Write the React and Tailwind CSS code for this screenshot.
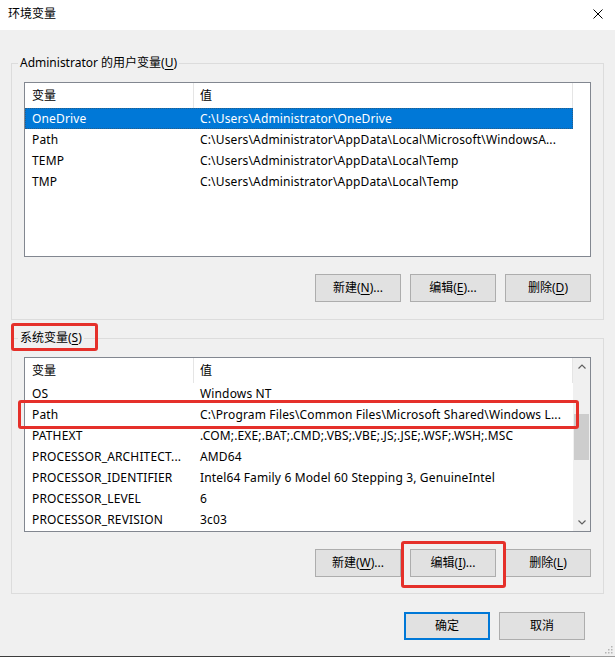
import React from "react";

const userRows = [
  ["OneDrive", "C:\\Users\\Administrator\\OneDrive"],
  ["Path", "C:\\Users\\Administrator\\AppData\\Local\\Microsoft\\WindowsA..."],
  ["TEMP", "C:\\Users\\Administrator\\AppData\\Local\\Temp"],
  ["TMP", "C:\\Users\\Administrator\\AppData\\Local\\Temp"],
];

const sysRows = [
  ["OS", "Windows NT"],
  ["Path", "C:\\Program Files\\Common Files\\Microsoft Shared\\Windows L..."],
  ["PATHEXT", ".COM;.EXE;.BAT;.CMD;.VBS;.VBE;.JS;.JSE;.WSF;.WSH;.MSC"],
  ["PROCESSOR_ARCHITECT...", "AMD64"],
  ["PROCESSOR_IDENTIFIER", "Intel64 Family 6 Model 60 Stepping 3, GenuineIntel"],
  ["PROCESSOR_LEVEL", "6"],
  ["PROCESSOR_REVISION", "3c03"],
];

function Mn({ children }) {
  return <span className="underline underline-offset-[2px] decoration-1">{children}</span>;
}

function RedBox({ className }) {
  return (
    <div
      className={`pointer-events-none absolute rounded-[3px] border-[3px] border-[#e5302a] ${className}`}
    />
  );
}

function Btn({ children, primary = false }) {
  return (
    <div
      className={`flex h-[28px] w-[86px] items-center justify-center bg-[#e1e1e1] text-[12px] leading-[16px] text-black ${
        primary ? "border-2 border-[#0078d7]" : "border border-[#adadad]"
      }`}
    >
      {children}
    </div>
  );
}

function Row({ name, value, selected, boxed }) {
  return (
    <div
      className={`relative flex h-[21px] w-[548px] shrink-0 items-center text-[12px] leading-[16px] tracking-[0.15px] ${
        selected
          ? "bg-[#0078d7] text-white outline-1 outline-dotted outline-[#2a5d86] -outline-offset-1"
          : "text-black"
      }`}
    >
      <div className="w-[169px] shrink-0 overflow-hidden whitespace-nowrap pl-[7px]">{name}</div>
      <div className="flex-1 overflow-hidden whitespace-nowrap pl-[6px]">{value}</div>
      {boxed && <RedBox className="left-[-7px] top-[-4px] h-[29px] w-[561px]" />}
    </div>
  );
}

function Chevron({ up }) {
  return (
    <svg width="8" height="5" viewBox="0 0 8 5">
      <polyline
        points={up ? "0.5,4.5 4,1 7.5,4.5" : "0.5,0.5 4,4 7.5,0.5"}
        fill="none"
        stroke="#606060"
        strokeWidth="1.2"
      />
    </svg>
  );
}

function Scrollbar() {
  return (
    <div className="flex w-[17px] flex-col bg-[#f0f0f0]">
      <div className="flex h-[17px] items-center justify-center">
        <Chevron up />
      </div>
      <div className="flex flex-1 flex-col px-[1px]">
        <div className="mt-[39px] h-[46px] bg-[#cdcdcd]" />
      </div>
      <div className="flex h-[17px] items-center justify-center">
        <Chevron />
      </div>
    </div>
  );
}

function List({ rows, selectedIndex = -1, boxedIndex = -1, scroll = false }) {
  return (
    <div className="flex h-[175px] w-[567px] border border-[#828790] bg-white">
      <div className="flex w-[548px] flex-col">
        <div className="flex h-[25px] shrink-0 text-[12px] leading-[16px] text-black">
          <div className="flex w-[169px] items-center border-r border-[#e5e5e5] pl-[7px]">变量</div>
          <div className="flex flex-1 items-center border-r border-[#e5e5e5] pl-[6px]">值</div>
        </div>
        {rows.map(([n, v], i) => (
          <Row key={n + i} name={n} value={v} selected={i === selectedIndex} boxed={i === boxedIndex} />
        ))}
      </div>
      {scroll ? <Scrollbar /> : <div className="w-[17px]" />}
    </div>
  );
}

export default function App() {
  return (
    <div className="flex h-[657px] w-[615px] flex-col overflow-hidden bg-[#f0f0f0] font-[family-name:'Noto_Sans','Noto_Sans_CJK_SC',sans-serif] text-black">
      {/* Title bar */}
      <div className="flex h-[30px] shrink-0 items-center justify-between bg-white pb-[2px] pl-[8px] pr-[12px]">
        <span className="text-[12px] leading-[16px]">环境变量</span>
        <svg width="10" height="10" viewBox="0 0 10 10">
          <path d="M0.5 0.5 L9.5 9.5 M9.5 0.5 L0.5 9.5" stroke="#000" strokeWidth="1" fill="none" />
        </svg>
      </div>

      <div className="flex flex-col px-[11px] pt-[25px]">
        {/* User variables */}
        <fieldset className="border border-[#dcdcdc] px-[12px] pb-[17px] pt-[11px]">
          <legend className="-ml-[6px] px-[2px] text-[12px] leading-[16px]">
            Administrator 的用户变量(<Mn>U</Mn>)
          </legend>
          <List rows={userRows} selectedIndex={0} />
          <div className="mt-[17px] flex justify-end gap-[9px]">
            <Btn>
              新建(<Mn>N</Mn>)...
            </Btn>
            <Btn>
              编辑(<Mn>E</Mn>)...
            </Btn>
            <Btn>
              删除(<Mn>D</Mn>)
            </Btn>
          </div>
        </fieldset>

        {/* System variables */}
        <fieldset className="mt-[10px] border border-[#dcdcdc] px-[12px] pb-[16px] pt-[11px]">
          <legend className="relative -ml-[6px] px-[2px] text-[12px] leading-[16px]">
            系统变量(<Mn>S</Mn>)
            <RedBox className="left-[-7px] top-[-7px] h-[28px] w-[87px]" />
          </legend>
          <List rows={sysRows} boxedIndex={1} scroll />
          <div className="mt-[17px] flex justify-end gap-[9px]">
            <Btn>
              新建(<Mn>W</Mn>)...
            </Btn>
            <div className="relative">
              <Btn>
                编辑(<Mn>I</Mn>)...
              </Btn>
              <RedBox className="left-[-9px] top-[-8px] h-[47px] w-[105px]" />
            </div>
            <Btn>
              删除(<Mn>L</Mn>)
            </Btn>
          </div>
        </fieldset>
      </div>

      {/* OK / Cancel */}
      <div className="mt-[18px] flex justify-end gap-[9px] pr-[30px]">
        <Btn primary>确定</Btn>
        <Btn>取消</Btn>
      </div>

      <div className="flex flex-1 items-end justify-end pb-[2px] pr-[2px]">
        <svg width="9" height="9" viewBox="0 0 9 9">
          <rect x="7" y="1" width="1.5" height="1.5" fill="#b4b4b4" />
          <rect x="4" y="4" width="1.5" height="1.5" fill="#b4b4b4" />
          <rect x="7" y="4" width="1.5" height="1.5" fill="#b4b4b4" />
          <rect x="1" y="7" width="1.5" height="1.5" fill="#b4b4b4" />
          <rect x="4" y="7" width="1.5" height="1.5" fill="#b4b4b4" />
          <rect x="7" y="7" width="1.5" height="1.5" fill="#b4b4b4" />
        </svg>
      </div>
      <div className="flex h-[1px] shrink-0">
        <div className="w-[570px] bg-[#3c3c3c]" />
        <div className="flex-1 bg-[#9a9a9a]" />
      </div>
    </div>
  );
}
